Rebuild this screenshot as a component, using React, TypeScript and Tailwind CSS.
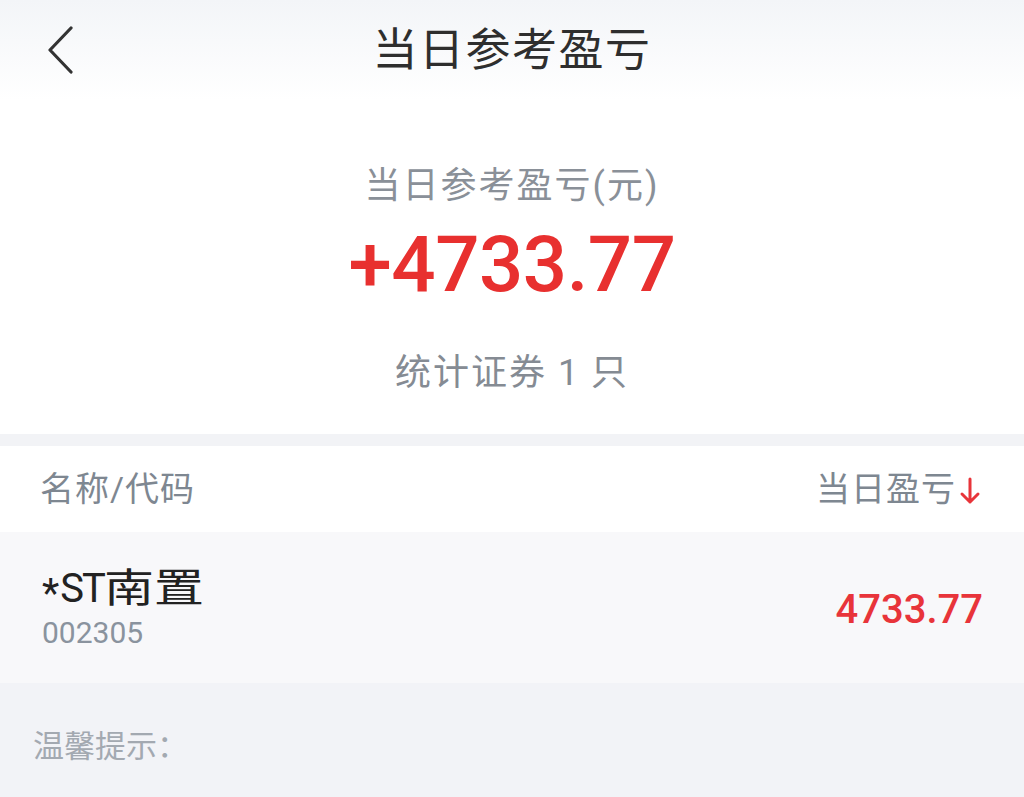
import React from "react";

const font = { fontFamily: "Roboto, 'Noto Sans CJK SC', 'Noto Sans', sans-serif" };

export default function App() {
  return (
    <div className="w-[1024px] h-[797px] bg-white overflow-hidden flex flex-col" style={font}>
      {/* Nav bar */}
      <div className="h-[100px] shrink-0 relative flex items-center justify-center bg-gradient-to-b from-[#f3f5f8] to-white">
        <div className="absolute left-[44px] top-[26px] w-[32px] h-[48px] flex items-center justify-center">
          <svg width="30" height="48" viewBox="0 0 30 48" fill="none">
            <path d="M26 2 L5 24 L26 46" stroke="#333333" strokeWidth="3.2" strokeLinecap="round" strokeLinejoin="round" />
          </svg>
        </div>
        <div className="text-[45px] leading-[50px] text-[#2e2e2e] tracking-[1.5px] mt-[2px]">当日参考盈亏</div>
      </div>

      {/* Summary */}
      <div className="h-[334px] shrink-0 flex flex-col items-center bg-white">
        <div className="mt-[66px] text-[36px] leading-[40px] tracking-[2px] text-[#8a9098]">当日参考盈亏(元)</div>
        <div className="mt-[19px] text-[78px] leading-[80px] font-medium text-[#e8302f] tracking-[-0.5px]">+4733.77</div>
        <div className="mt-[48px] text-[36px] leading-[40px] tracking-[2px] text-[#858b93]">统计证券 1 只</div>
      </div>

      {/* Separator */}
      <div className="h-[12px] shrink-0 bg-[#f2f3f6]" />

      {/* Column header */}
      <div className="h-[86px] shrink-0 flex items-center justify-between px-[40px] pr-[42px] bg-white">
        <div className="text-[34px] leading-[40px] tracking-[1px] text-[#7e8791]">名称/代码</div>
        <div className="flex items-center">
          <span className="text-[34px] leading-[40px] tracking-[1px] text-[#7e8791]">当日盈亏</span>
          <svg width="24" height="30" viewBox="0 0 24 30" fill="none" className="ml-[2px] mt-[4px]">
            <path d="M12 3 V26 M4 18 L12 26 L20 18" stroke="#e8343a" strokeWidth="3" strokeLinecap="round" strokeLinejoin="round" />
          </svg>
        </div>
      </div>

      {/* Stock row */}
      <div className="h-[151px] shrink-0 flex items-center justify-between pl-[42px] pr-[41px] bg-[#f8f8fa]">
        <div className="flex flex-col">
          <div className="text-[40px] leading-[46px] text-[#222222] whitespace-nowrap">
            <span className="inline-block translate-y-[5px] mr-[1px]">*</span>
            <span className="tracking-[-2px]">ST</span>
            <span className="inline-block scale-x-[1.25] origin-left mr-[20px]">南置</span>
          </div>
          <div className="text-[30px] leading-[34px] text-[#8a939e] mt-[4px]">002305</div>
        </div>
        <div className="text-[40px] leading-[46px] font-medium text-[#e8343a] mt-[4px]">4733.77</div>
      </div>

      {/* Tips */}
      <div className="flex-1 bg-[#f2f3f7] px-[33px] pt-[46px]">
        <div className="text-[31px] leading-[36px] text-[#a3a9b1]">温馨提示：</div>
      </div>
    </div>
  );
}
